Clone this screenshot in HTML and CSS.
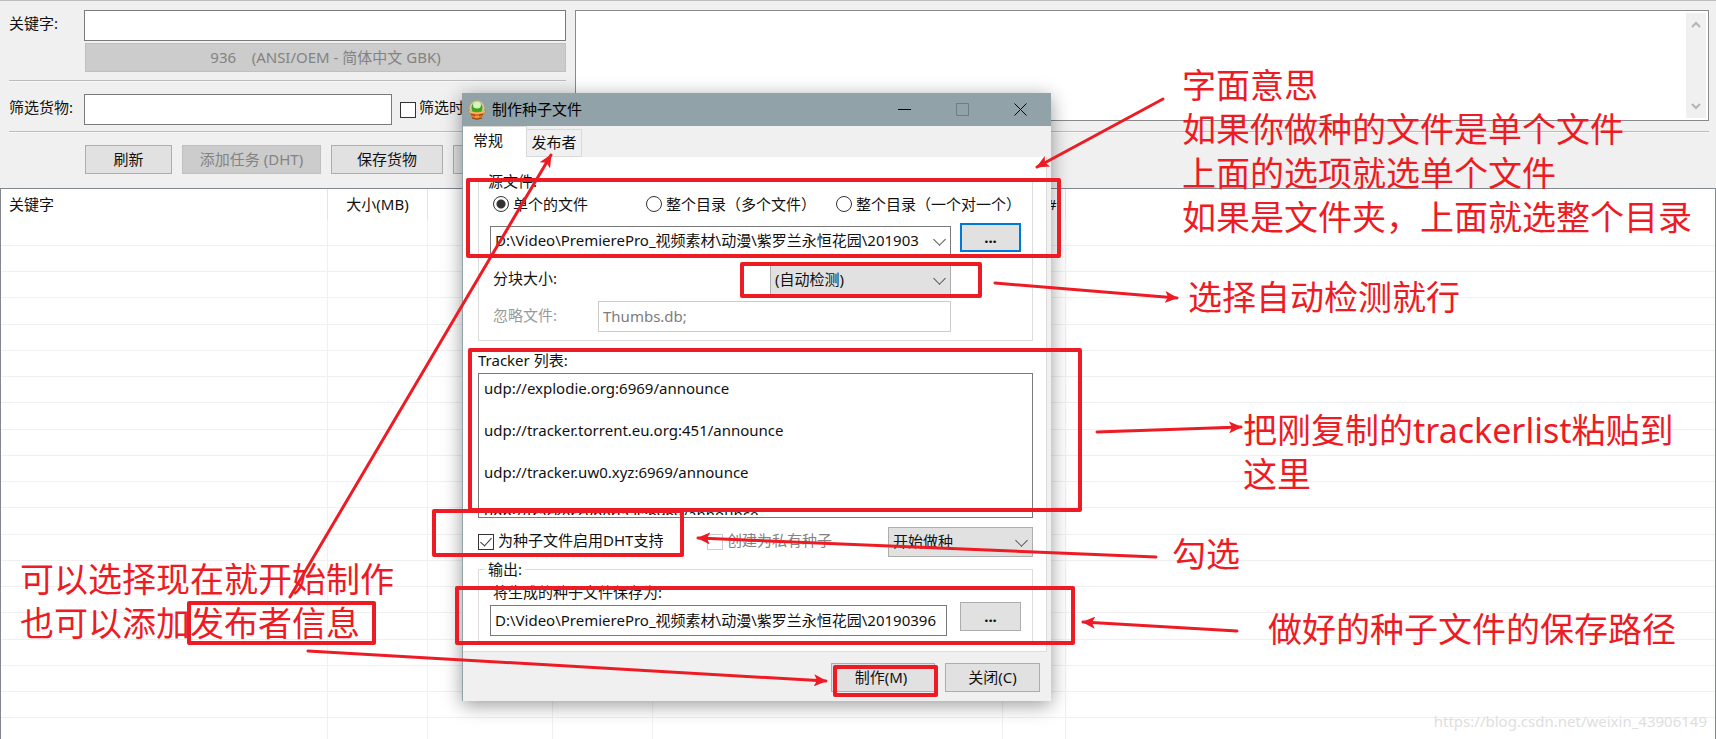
FILE: index.html
```
<!DOCTYPE html>
<html lang="zh-CN">
<head>
    <meta charset="UTF-8">
    <meta name="viewport" content="width=device-width, initial-scale=1.0">
    <title>制作种子文件</title>
    <link rel="stylesheet" href="styles.css">
</head>
<body>
    <div class="search">
        <div class="search-form">
            <div class="field-row">
                <label for="keyword">关键字:</label>
                <input type="text" id="keyword">
            </div>
            <button class="codepage" disabled>936 &nbsp;&nbsp; (ANSI/OEM - 简体中文 GBK)</button>
            <hr>
            <div class="field-row">
                <label for="filter">筛选货物:</label>
                <input type="text" id="filter" class="filter-input">
                <input type="checkbox" id="filterOn">
                <label for="filterOn" class="check-label">筛选时</label>
            </div>
        </div>
        <div class="log">
            <textarea aria-label="日志"></textarea>
            <div class="scrollbar">
                <svg width="10" height="8" viewBox="0 0 10 8"><path d="M1 6l4-4 4 4"/></svg>
                <svg width="10" height="8" viewBox="0 0 10 8"><path d="M1 2l4 4 4-4"/></svg>
            </div>
        </div>
    </div>
    <hr class="wide">
    <div class="toolbar">
        <button class="refresh">刷新</button>
        <button class="add" disabled>添加任务 (DHT)</button>
        <button class="save">保存货物</button>
        <button class="more" aria-label="更多"></button>
    </div>

    <div class="results">
        <table>
            <colgroup>
                <col class="c-key"><col class="c-size"><col class="c-a"><col class="c-size"><col class="c-b"><col class="c-c"><col>
            </colgroup>
            <thead>
                <tr><th>关键字</th><th class="center">大小(MB)</th><th></th><th></th><th></th><th class="num">#</th><th></th></tr>
            </thead>
            <tbody id="rows"></tbody>
        </table>
    </div>

    <div class="dialog" role="dialog" aria-labelledby="dialogTitle">
        <div class="titlebar">
            <svg class="app-icon" width="18" height="20" viewBox="0 0 18 20">
                <ellipse cx="9" cy="8" rx="7.500" ry="7.500" fill="#d9d2ae" stroke="#b5a878"/>
                <ellipse cx="9" cy="8" rx="5.500" ry="6.500" fill="#3fa51f"/>
                <ellipse cx="9" cy="5" rx="4" ry="3.500" fill="#d6f5bd"/>
                <path d="M0 10q9 4 18 0l-1 3-1.500.500-1.500 5q-5 2.500-10 0l-1.500-5L1 13z" fill="#d47a2c"/>
                <path d="M1 11.500q8 3.500 16 0" fill="none" stroke="#f6bd6a" stroke-width="1.500"/>
                <path d="M3 14.500q6 2 12 0M4 18q5 2.500 10 0" fill="none" stroke="#963f10"/>
                <path d="M7 16.500h4" stroke="#ff9a3c" stroke-width="2"/>
            </svg>
            <span id="dialogTitle">制作种子文件</span>
            <div class="window-buttons">
                <button aria-label="最小化"><svg width="13" height="13" viewBox="0 0 13 13"><path d="M0 6.500h13"/></svg></button>
                <button aria-label="最大化" disabled><svg width="13" height="13" viewBox="0 0 13 13"><path d="M.5.500h12v12H.5z"/></svg></button>
                <button aria-label="关闭窗口"><svg width="13" height="13" viewBox="0 0 13 13"><path d="M.5.500l12 12M12.500.500l-12 12"/></svg></button>
            </div>
        </div>
        <div class="tabs">
            <button class="tab active">常规</button>
            <button class="tab">发布者</button>
        </div>
        <div class="panel">
            <fieldset>
                <legend>源文件:</legend>
                <div class="radios">
                    <label><input type="radio" name="source" checked>单个的文件</label>
                    <label><input type="radio" name="source">整个目录（多个文件）</label>
                    <label><input type="radio" name="source">整个目录（一个对一个）</label>
                </div>
                <div class="source-row">
                    <span class="select path">
                        <select aria-label="源文件路径"><option>D:\Video\PremierePro_视频素材\动漫\紫罗兰永恒花园\201903</option></select>
                    </span>
                    <button class="browse focused" aria-label="浏览源文件">...</button>
                </div>
                <div class="option-row">
                    <label for="piece">分块大小:</label>
                    <span class="select piece">
                        <select id="piece"><option>(自动检测)</option></select>
                    </span>
                </div>
                <div class="option-row disabled">
                    <label for="ignore">忽略文件:</label>
                    <input type="text" id="ignore" class="ignore" value="Thumbs.db;" disabled>
                </div>
            </fieldset>

            <label for="trackers" class="tracker-label">Tracker 列表:</label>
            <div class="tracker-box">
                <textarea id="trackers">udp://explodie.org:6969/announce

udp://tracker.torrent.eu.org:451/announce

udp://tracker.uw0.xyz:6969/announce

udp://tracker.cyberia.is:6969/announce</textarea>
            </div>

            <div class="flags">
                <input type="checkbox" id="dht" checked>
                <label for="dht">为种子文件启用DHT支持</label>
                <input type="checkbox" id="private" class="private" disabled>
                <label for="private" class="muted">创建为私有种子</label>
                <span class="select seed">
                    <select aria-label="完成后"><option>开始做种</option></select>
                </span>
            </div>

            <fieldset class="output">
                <legend>输出:</legend>
                <div class="output-row">
                    <div class="output-field">
                        <label for="output">将生成的种子文件保存为:</label>
                        <input type="text" id="output" value="D:\Video\PremierePro_视频素材\动漫\紫罗兰永恒花园\20190396">
                    </div>
                    <button class="browse" aria-label="浏览保存路径">...</button>
                </div>
            </fieldset>
        </div>
        <div class="footer">
            <button class="make">制作(M)</button>
            <button class="close">关闭(C)</button>
        </div>
    </div>

    <svg class="marks" aria-hidden="true">
        <defs>
            <marker id="head" markerUnits="userSpaceOnUse" markerWidth="14" markerHeight="12" refX="12" refY="6" orient="auto">
                <path d="M0 0l13 6-13 6 3-6z"/>
            </marker>
        </defs>
        <rect x="468" y="180" width="591" height="76"/>
        <rect x="742" y="264" width="238" height="32"/>
        <rect x="470" y="350" width="610" height="160"/>
        <rect x="434" y="511" width="248" height="44"/>
        <rect x="457" y="588" width="616" height="55"/>
        <rect x="835" y="667" width="101" height="28"/>
        <rect x="189" y="603" width="185" height="40"/>
        <path d="M290 597L551 155"/>
        <path d="M1163 99L1037 167"/>
        <path d="M995 283L1177 298"/>
        <path d="M1097 432L1241 427"/>
        <path d="M1156 557L698 538"/>
        <path d="M1237 631L1083 622"/>
        <path d="M308 651L826 681"/>
    </svg>
    <div class="note note-source">字面意思<br>如果你做种的文件是单个文件<br>上面的选项就选单个文件<br>如果是文件夹，上面就选整个目录</div>
    <div class="note note-piece">选择自动检测就行</div>
    <div class="note note-tracker">把刚复制的trackerlist粘贴到<br>这里</div>
    <div class="note note-dht">勾选</div>
    <div class="note note-output">做好的种子文件的保存路径</div>
    <div class="note note-publisher">可以选择现在就开始制作<br>也可以添加发布者信息</div>
    <div class="watermark">https://blog.csdn.net/weixin_43906149</div>

    <script>
        // Empty grid rows under the header
        const rows = document.getElementById('rows');
        for (let i = 0; i < 20; i++) {
            rows.innerHTML += '<tr>' + '<td></td>'.repeat(7) + '</tr>';
        }
    </script>
</body>
</html>
```
FILE: styles.css
```
* {
    box-sizing: border-box;
}
body {
    margin: 0;
    height: 100vh;
    display: flex;
    flex-direction: column;
    position: relative;
    overflow: hidden;
    background: #f0f0f0;
    border-top: 1px solid #bdbdbd;
    color: #111;
    font-family: "Noto Sans", "Noto Sans CJK SC", sans-serif;
    font-size: 15px;
    line-height: 20px;
}
button, input, select, textarea {
    margin: 0;
    font: inherit;
    color: inherit;
}
button {
    height: 29px;
    padding: 0 0 2px;
    background: #e1e1e1;
    border: 1px solid #adadad;
}
button:disabled {
    background: #ccc;
    border-color: #bfbfbf;
    color: #838383;
}
input[type="text"] {
    height: 31px;
    min-width: 0;
    padding: 0 4px 2px;
    background: white;
    border: 1px solid #7a7a7a;
}
input[type="checkbox"], input[type="radio"] {
    appearance: none;
    flex: none;
    width: 16px;
    height: 16px;
    background: white;
    border: 1px solid #333;
}
input[type="radio"] {
    border-radius: 50%;
}
input[type="radio"]:checked {
    background: radial-gradient(circle, #333 0 4px, white 5px);
}
input[type="checkbox"]:checked::after {
    content: "";
    display: block;
    width: 5px;
    height: 10px;
    margin: 0 auto;
    border: solid #333;
    border-width: 0 1px 1px 0;
    transform: rotate(42deg);
}
textarea {
    display: block;
    border: 0;
    padding: 0;
    resize: none;
    overflow: hidden;
    background: white;
}
hr {
    margin: 8px 0 12px;
    border: 0;
    height: 2px;
    background: #bcbcbc;
    border-bottom: 1px solid #f8f8f8;
}

/* Search area */
.search {
    display: flex;
    gap: 9px;
    padding: 9px 7px 0 9px;
}
.search-form {
    width: 557px;
    flex: none;
}
.field-row {
    display: flex;
    align-items: center;
}
.field-row label {
    width: 75px;
    padding-bottom: 6px;
}
.field-row input[type="text"] {
    flex: 1;
}
.field-row input.filter-input[type="text"] {
    flex: none;
    width: 308px;
    margin-right: 8px;
}
.field-row .check-label {
    padding-left: 3px;
    /* only the part left of the dialog is in view */
    width: 46px;
    overflow: hidden;
    white-space: nowrap;
}
.codepage {
    display: block;
    width: 481px;
    margin: 2px 0 0 76px;
}
.log {
    flex: 1;
    display: flex;
    height: 111px;
    padding: 2px;
    background: white;
    border: 1px solid #8a8a8a;
}
.log textarea {
    flex: 1;
}
.scrollbar {
    width: 20px;
    padding: 8px 0;
    background: #f0f0f0;
    display: flex;
    flex-direction: column;
    justify-content: space-between;
    align-items: center;
}
.scrollbar svg {
    fill: none;
    stroke: #b5b5b5;
    stroke-width: 2;
}
hr.wide {
    flex: none;
    margin: 6px 7px 12px 9px;
}
.toolbar {
    display: flex;
    gap: 10px;
    padding: 0 0 14px 85px;
}
.refresh {
    width: 87px;
}
.add {
    width: 139px;
}
.save {
    width: 112px;
}
.more {
    width: 87px;
}

/* Result list */
.results {
    flex: 1;
    min-height: 0;
    overflow: hidden;
    background: white;
    border: 1px solid #828790;
    border-bottom: 0;
}
table {
    width: 100%;
    table-layout: fixed;
    border-collapse: separate;
    border-spacing: 0;
}
th {
    height: 31px;
    padding: 0 8px 2px;
    text-align: left;
    font-weight: normal;
    border-right: 1px solid #e5e5e5;
}
th.center {
    padding: 0 0 2px;
    text-align: center;
}
th.num {
    padding-left: 44px;
}
td {
    height: 26px;
    padding: 0;
    border-right: 1px solid #f0f0f0;
    border-bottom: 1px solid #f0f0f0;
}
tr:nth-child(4n) td {
    height: 27px;
}
th:last-child, td:last-child {
    border-right: 0;
}
.c-key {
    width: 327px;
}
.c-size {
    width: 100px;
}
.c-a {
    width: 125px;
}
.c-b {
    width: 350px;
}
.c-c {
    width: 63px;
}

/* Dialog */
.dialog {
    position: absolute;
    left: 462px;
    top: 92px;
    width: 589px;
    background: #f0f0f0;
    border-left: 1px solid #91a3a9;
    box-shadow: 0 4px 18px rgba(0,0,0,0.4);
}
.titlebar {
    display: flex;
    align-items: center;
    height: 33px;
    padding-left: 5px;
    background: #91a3a9;
    color: black;
}
.app-icon {
    margin-right: 6px;
}
#dialogTitle {
    padding-bottom: 2px;
}
.window-buttons {
    margin-left: auto;
    padding-right: 2px;
    display: flex;
}
.window-buttons button {
    display: flex;
    align-items: center;
    justify-content: center;
    width: 58px;
    padding: 0;
    background: none;
    border: 0;
}
.window-buttons svg {
    fill: none;
    stroke: black;
}
.window-buttons button:disabled svg {
    stroke: #6d7c81;
}
.tabs {
    display: flex;
    align-items: flex-end;
    height: 31px;
}
.tab {
    height: 28px;
    width: 55px;
    background: #f0f0f0;
    border: 1px solid #d9d9d9;
    border-left: 0;
}
.tab.active {
    width: 64px;
    height: 31px;
    padding: 0 10px 4px;
    text-align: left;
    background: white;
    border-bottom: 0;
}
.panel {
    margin-right: 4px;
    padding: 14px 13px 8px 15px;
    background: white;
    border: solid #dcdcdc;
    border-width: 0 1px 1px 0;
}
fieldset {
    min-width: 0;
    margin: 0;
    padding: 3px 11px 8px 11px;
    border: 1px solid #dcdcdc;
}
legend {
    margin-left: -5px;
    padding: 0 3px;
}
.radios {
    display: grid;
    grid-template-columns: 153px 190px auto;
    padding-left: 3px;
}
.radios label {
    display: flex;
    align-items: center;
    gap: 4px;
    white-space: nowrap;
}
.source-row {
    display: flex;
    align-items: flex-start;
    gap: 9px;
    margin: 9px 0;
}
.select {
    position: relative;
    display: block;
}
.select::after {
    content: "";
    position: absolute;
    right: 7px;
    top: 9px;
    width: 8px;
    height: 8px;
    border: solid #555;
    border-width: 0 1px 1px 0;
    transform: rotate(45deg);
    pointer-events: none;
}
select {
    appearance: none;
    display: block;
    width: 100%;
    height: 30px;
    padding: 0 20px 2px 4px;
    background: #e1e1e1;
    border: 1px solid #adadad;
    border-radius: 0;
}
.path {
    flex: 1;
    min-width: 0;
    margin-top: 3px;
}
.path select {
    background: white;
    border-color: #7a7a7a;
}
.browse {
    flex: none;
    width: 61px;
    font-weight: bold;
}
.browse.focused {
    border: 2px solid #0078d7;
}
.option-row {
    display: flex;
    align-items: center;
    justify-content: space-between;
    padding: 0 70px 0 3px;
}
.option-row label {
    padding-bottom: 4px;
}
.option-row.disabled {
    margin-top: 6px;
    color: #9a9a9a;
}
.piece {
    width: 181px;
}
input.ignore[type="text"] {
    width: 353px;
    border-color: #ccc;
    color: #7d7d7d;
}
.tracker-label {
    display: block;
    margin: 9px 0 3px;
}
.tracker-box {
    height: 145px;
    padding: 4px 5px 2px;
    border: 1px solid #7a7a7a;
}
.tracker-box textarea {
    width: 100%;
    height: 100%;
    line-height: 21px;
}
.flags {
    display: flex;
    align-items: center;
    margin-top: 9px;
}
.flags label {
    padding: 0 0 4px 4px;
}
.private[type="checkbox"] {
    margin-left: auto;
    border-color: #ccc;
}
.muted {
    color: #838383;
}
.seed {
    width: 145px;
    margin-left: 56px;
}
.output {
    margin-top: 2px;
    padding-bottom: 6px;
}
.output-row {
    display: flex;
    align-items: flex-start;
    justify-content: space-between;
}
.output-row .browse {
    margin-top: 20px;
}
.output-field {
    width: 457px;
}
.output-field label {
    display: block;
    padding-left: 3px;
    margin-bottom: 3px;
}
.output-field input[type="text"] {
    display: block;
    width: 100%;
}
.footer {
    display: flex;
    justify-content: flex-end;
    gap: 10px;
    padding: 11px 11px 9px;
}
.make {
    width: 104px;
    padding-right: 4px;
}
.close {
    width: 95px;
}

/* Hand-drawn marks and notes over the windows */
.marks {
    position: absolute;
    left: 0;
    top: -1px;
    width: 100%;
    height: 100vh;
    pointer-events: none;
    fill: none;
    stroke: #ed1c24;
    stroke-width: 4;
    stroke-linejoin: round;
}
.marks > path {
    stroke-width: 3;
    stroke-linecap: round;
    marker-end: url(#head);
}
.marks marker path {
    fill: #ed1c24;
    stroke: none;
}
.note {
    position: absolute;
    color: #ed1c24;
    font-size: 34px;
    line-height: 44px;
    white-space: nowrap;
}
.note-source {
    left: 1182px;
    top: 62px;
}
.note-piece {
    left: 1188px;
    top: 274px;
}
.note-tracker {
    left: 1243px;
    top: 407px;
}
.note-dht {
    left: 1172px;
    top: 531px;
}
.note-output {
    left: 1268px;
    top: 606px;
}
.note-publisher {
    left: 20px;
    top: 556px;
}
.watermark {
    position: absolute;
    right: 9px;
    bottom: 8px;
    color: #dedede;
}
```
